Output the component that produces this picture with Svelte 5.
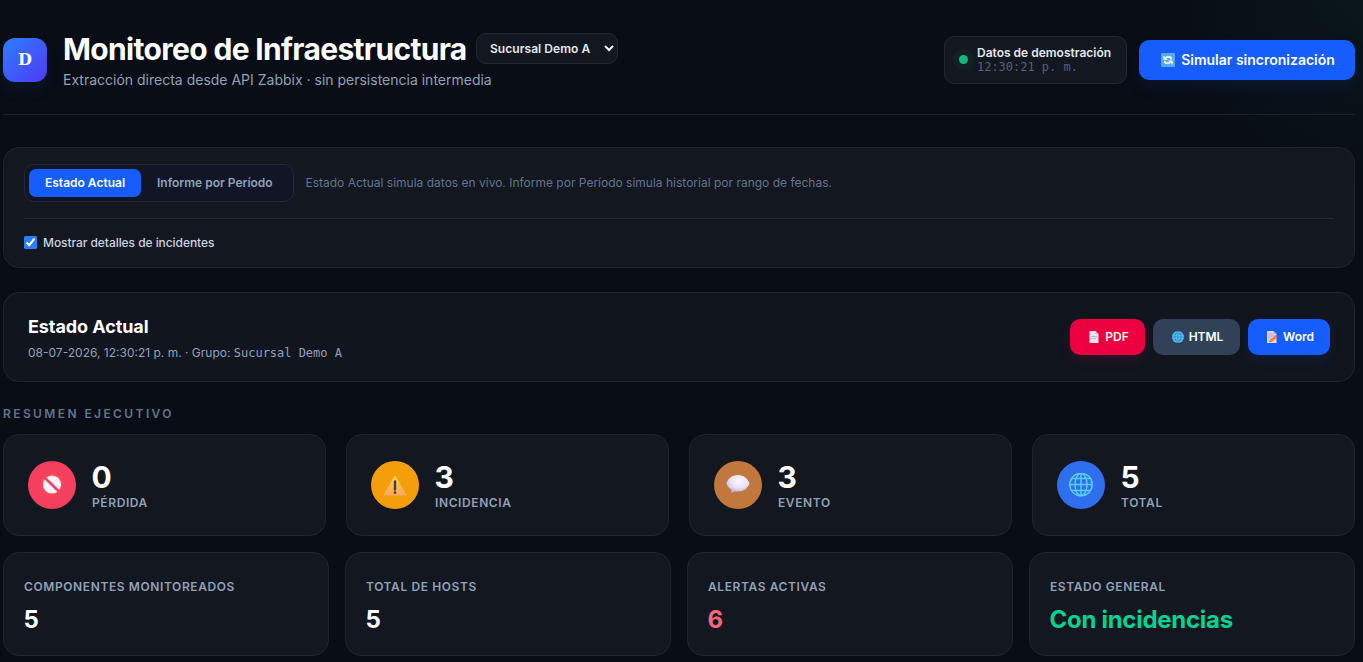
<script>
  let group = 'Sucursal Demo A'
  let tab = 'actual'
  let showDetails = true

  const time = '12:30:21 p. m.'
  const date = '08-07-2026'

  const summary = [
    { icon: 'blocked', value: 0, label: 'Pérdida' },
    { icon: 'warning', value: 3, label: 'Incidencia' },
    { icon: 'bubble', value: 3, label: 'Evento' },
    { icon: 'globe', value: 5, label: 'Total' }
  ]

  const totals = [
    { label: 'Componentes monitoreados', value: '5' },
    { label: 'Total de hosts', value: '5' },
    { label: 'Alertas activas', value: '6', tone: 'danger' },
    { label: 'Estado general', value: 'Con incidencias', tone: 'ok' }
  ]
</script>

<div class="page">
  <header>
    <div class="logo">D</div>
    <div class="heading">
      <div class="title-row">
        <h1>Monitoreo de Infraestructura</h1>
        <div class="select">
          <select bind:value={group}>
            <option>Sucursal Demo A</option>
            <option>Sucursal Demo B</option>
          </select>
          <svg width="10" height="7" viewBox="0 0 10 7"><path d="M1 1l4 4 4-4" fill="none" stroke="#f1f5f9" stroke-width="2" /></svg>
        </div>
      </div>
      <p>Extracción directa desde API Zabbix · sin persistencia intermedia</p>
    </div>
    <div class="status">
      <span class="dot"></span>
      <div>
        <strong>Datos de demostración</strong>
        <span class="mono">{time}</span>
      </div>
    </div>
    <button class="sync">
      <svg width="14" height="14" viewBox="0 0 14 14">
        <rect width="14" height="14" rx="1" fill="#5aa9f8" />
        <path d="M5 4.200h3.500q1.800 0 1.800 2.300M9 10H5.500q-1.800 0-1.800-2.300" fill="none" stroke="#fff" stroke-width="1.700" />
        <path d="M2.500 2.500v4.300h4.300zM11.500 11.700V7.400H7.200z" fill="#fff" />
      </svg>
      <span>Simular sincronización</span>
    </button>
  </header>

  <section class="card filters">
    <div class="mode">
      <div class="tabs">
        <button class:active={tab === 'actual'} on:click={() => tab = 'actual'}>Estado Actual</button>
        <button class:active={tab === 'periodo'} on:click={() => tab = 'periodo'}>Informe por Período</button>
      </div>
      <span class="hint">Estado Actual simula datos en vivo. Informe por Período simula historial por rango de fechas.</span>
    </div>
    <label>
      <input type="checkbox" bind:checked={showDetails} />
      <span>Mostrar detalles de incidentes</span>
    </label>
  </section>

  <section class="card report">
    <div>
      <h2>Estado Actual</h2>
      <p>{date}, {time} · Grupo: <span class="mono">{group}</span></p>
    </div>
    <div class="exports">
      <button class="pdf">
        <svg width="12" height="12" viewBox="0 0 12 12">
          <path d="M1.500 0h6l3 3v9h-9z" fill="#eee4f2" />
          <path d="M7.500 0v3h3z" fill="#bdb0c9" />
          <path d="M3 5.500h6M3 7.500h5" stroke="#b3a8c0" stroke-width=".8" />
        </svg>
        <span>PDF</span>
      </button>
      <button class="html">
        <svg width="12" height="12" viewBox="0 0 24 24">
          <circle cx="12" cy="12" r="12" fill="#52c3f8" />
          <path d="M12 0v24M0 12h24M2 6h20M2 18h20M12 0c-8 6-8 18 0 24M12 0c8 6 8 18 0 24" fill="none" stroke="#2a7fbd" stroke-width="1.200" />
        </svg>
        <span>HTML</span>
      </button>
      <button class="word">
        <svg width="12" height="12" viewBox="0 0 12 12">
          <path d="M1 0h6.500l3 3v9H1z" fill="#e0d6e6" />
          <path d="M7.500 0v3h3z" fill="#b8abc4" />
          <path d="M2.500 3h4M2.500 5h6M2.500 7h3" stroke="#aaa0b6" stroke-width=".8" />
          <path d="M3 11.300l.6-2.200L9 4.800l1.900 2-5.200 4z" fill="#fb7a42" />
          <path d="M9 4.800l1-.8 1.900 1.900-1 .9z" fill="#e5484d" />
        </svg>
        <span>Word</span>
      </button>
    </div>
  </section>

  <h3>Resumen ejecutivo</h3>

  <div class="summary">
    {#each summary as item}
      <div class="card stat">
        <div class="badge {item.icon}">
          {#if item.icon === 'blocked'}
            <svg width="24" height="24" viewBox="0 0 24 24">
              <circle cx="12" cy="11.500" r="10.300" fill="#f9f1ff" stroke="#ff4653" stroke-width="2.500" />
              <path d="M4.500 4.500l15 14.500" stroke="#f8405a" stroke-width="2.500" />
            </svg>
          {:else if item.icon === 'warning'}
            <svg width="24" height="24" viewBox="0 0 24 24">
              <defs>
                <linearGradient id="warn" x1="0" y1="0" x2="0" y2="1">
                  <stop offset="0" stop-color="#ffd24a" />
                  <stop offset="1" stop-color="#ffa75c" />
                </linearGradient>
              </defs>
              <path d="M12 3l11 19H1z" fill="url(#warn)" stroke="url(#warn)" stroke-linejoin="round" />
              <path d="M12 8.500v8" stroke="#483d4e" stroke-width="2.400" stroke-linecap="round" />
              <circle cx="12" cy="19.600" r="1.300" fill="#483d4e" />
            </svg>
          {:else if item.icon === 'bubble'}
            <svg width="24" height="24" viewBox="0 0 24 24">
              <defs>
                <radialGradient id="bubble" cx=".55" cy=".35" r=".65">
                  <stop offset="0" stop-color="#fbf8fd" />
                  <stop offset=".6" stop-color="#eae1f2" />
                  <stop offset="1" stop-color="#bba9d3" />
                </radialGradient>
              </defs>
              <path d="M12 2C6 2 2 5.500.3 10.500c1.200 2.800 2.900 4.900 4.900 6.100.3 1.200.2 2.300-.3 3.200 1.900-.2 3.300-.8 4.100-1.500 1 .2 2 .2 3 .2 5.500 0 9.700-3 11.700-8C21.700 5.500 18 2 12 2z" fill="url(#bubble)" />
            </svg>
          {:else}
            <svg width="24" height="24" viewBox="0 0 24 24">
              <g fill="none" stroke="#5acbff" stroke-width="1.500">
                <circle cx="12" cy="11.500" r="11.200" />
                <ellipse cx="12" cy="11.500" rx="6" ry="11.200" />
                <path d="M12 .3v22.400M.8 11.500h22.400M3 5.500h18M3 17.500h18" />
              </g>
            </svg>
          {/if}
        </div>
        <div>
          <div class="number">{item.value}</div>
          <div class="caption">{item.label}</div>
        </div>
      </div>
    {/each}
  </div>

  <div class="totals">
    {#each totals as item}
      <div class="card total">
        <div class="caption">{item.label}</div>
        <div class="value {item.tone || ''}">{item.value}</div>
      </div>
    {/each}
  </div>
</div>

<style>
:global(body) {
  background: #090d15;
  overflow: hidden;
}

.page {
  box-sizing: border-box;
  width: 1363px;
  height: 662px;
  padding: 0 8px 0 3px;
  overflow: hidden;
  font-family: Inter, 'Liberation Sans', sans-serif;
  color: #e2e8f0;
  background: radial-gradient(circle at 100% 0, #0a151c 0, transparent 220px), #090d15;
}

h1, h2, h3, p {
  margin: 0;
}

button {
  border: 0;
  padding: 0;
  font-family: inherit;
  color: #fff;
}

.mono {
  font-family: 'DejaVu Sans Mono', monospace;
  font-size: 12px;
  letter-spacing: -.02px;
}

.card {
  box-sizing: border-box;
  background: #13171f;
  border: 1px solid #20242d;
  border-radius: 16px;
}

header {
  display: flex;
  align-items: center;
  box-sizing: border-box;
  height: 115px;
  padding-top: 6px;
  border-bottom: 1px solid #1b1f27;
}

.logo {
  width: 44px;
  height: 44px;
  margin-right: 16px;
  border-radius: 12px;
  text-align: center;
  font: bold 16px/44px 'DejaVu Serif', serif;
  color: #fff;
  background: linear-gradient(135deg, #2b7fff, #4f39f6);
  box-shadow: 0 8px 16px rgba(43, 90, 255, .09);
}

.heading {
  flex: 1;
}

.title-row {
  display: flex;
  align-items: center;
  gap: 10px;
  height: 36px;
}

h1 {
  width: 403px;
  font-size: 30px;
  line-height: 36px;
  font-weight: 700;
  letter-spacing: -.67px;
  white-space: nowrap;
  color: #fff;
}

.select {
  position: relative;
}

.select svg {
  position: absolute;
  right: 4px;
  top: 12px;
}

select {
  display: block;
  appearance: none;
  box-sizing: border-box;
  width: 142px;
  height: 31px;
  padding: 0 0 0 13px;
  border: 1px solid #242831;
  border-radius: 10px;
  background: #13171f;
  color: #e2e8f0;
  font: 600 12px Inter, sans-serif;
  letter-spacing: .05px;
}

.heading p {
  margin-top: 3px;
  font-size: 14px;
  line-height: 20px;
  color: #90a1b9;
}

.status {
  box-sizing: border-box;
  display: flex;
  align-items: center;
  width: 183px;
  height: 48px;
  margin-right: 12px;
  padding-left: 14px;
  gap: 9px;
  border: 1px solid #23272f;
  border-radius: 10px;
  background: #13171f;
}

.status strong, .status .mono {
  display: block;
  font-size: 12px;
  line-height: 14px;
}

.status strong {
  font-weight: 600;
}

.status .mono {
  color: #52617a;
}

.dot {
  width: 9px;
  height: 9px;
  margin-bottom: 1px;
  border-radius: 50%;
  background: #10b981;
  box-shadow: 0 0 0 6px #132023;
}

.sync {
  display: flex;
  align-items: center;
  justify-content: center;
  gap: 6px;
  width: 216px;
  height: 40px;
  padding: 0 0 1px 2px;
  border-radius: 10px;
  background: #155dfc;
  font-size: 14px;
  font-weight: 600;
  box-shadow: 0 8px 16px rgba(21, 93, 252, .09);
}

.filters {
  height: 121px;
  margin-top: 32px;
  padding: 16px 20px;
}

.mode {
  display: flex;
  align-items: center;
  height: 55px;
  padding-bottom: 16px;
  box-sizing: border-box;
  border-bottom: 1px solid #23272f;
  margin-bottom: 15px;
}

.tabs {
  box-sizing: border-box;
  display: flex;
  width: 270px;
  height: 38px;
  padding: 4px;
  border: 1px solid #242935;
  border-radius: 10px;
  background: #101626;
}

.tabs button {
  height: 28px;
  padding: 0 16px 1px;
  border-radius: 7px;
  background: none;
  font-size: 12px;
  font-weight: 600;
  color: #90a1b9;
}

.tabs .active {
  background: #155dfc;
  color: #fff;
}

.hint {
  margin: 0 0 2px 11.500px;
  font-size: 12px;
  color: #62748e;
}

label {
  display: flex;
  align-items: center;
  gap: 6px;
  height: 16px;
  font-size: 12px;
  font-weight: 500;
  letter-spacing: -.06px;
  color: #cad5e2;
}

input {
  width: 13px;
  height: 13px;
  margin: 0;
  accent-color: #2b7fff;
}

.report {
  display: flex;
  align-items: center;
  justify-content: space-between;
  height: 90px;
  margin-top: 24px;
  padding: 0 24px;
  background: #11151e;
}

h2 {
  padding-top: 2px;
  font-size: 18px;
  line-height: 28px;
  font-weight: 700;
  letter-spacing: -.08px;
  color: #fff;
}

.report p {
  margin-top: 2px;
  font-size: 12px;
  line-height: 20px;
  color: #90a1b9;
}

.exports {
  display: flex;
  gap: 8px;
}

.exports button {
  display: flex;
  align-items: center;
  justify-content: center;
  gap: 5px;
  height: 36px;
  padding: 0 0 1px 2px;
  border-radius: 10px;
  font-size: 12px;
  font-weight: 600;
}

.exports .pdf {
  width: 75px;
  background: #ec003f;
  box-shadow: 0 6px 12px rgba(236, 0, 63, .11);
}

.exports .html {
  width: 87px;
  background: #314158;
}

.exports .word {
  width: 82px;
  background: #155dfc;
  box-shadow: 0 6px 12px rgba(21, 93, 252, .09);
}

h3 {
  height: 16px;
  margin: 24px 0 12px;
  font-size: 12px;
  line-height: 16px;
  font-weight: 600;
  letter-spacing: 2.400px;
  text-transform: uppercase;
  color: #62748e;
}

.summary, .totals {
  display: grid;
  grid-template-columns: repeat(4, 1fr);
}

.summary {
  gap: 20px;
}

.totals {
  gap: 16px;
  margin-top: 16px;
}

.stat {
  display: flex;
  align-items: center;
  gap: 16px;
  height: 102px;
  padding: 0 24px;
}

.badge {
  display: flex;
  align-items: center;
  justify-content: center;
  width: 48px;
  height: 48px;
  border-radius: 50%;
}

.blocked {
  background: #f43f5e;
}

.warning {
  background: #f59e0b;
}

.bubble {
  background: #c2783c;
}

.globe {
  background: #2f6fed;
}

.number {
  padding-top: 2px;
  font-size: 30px;
  line-height: 32px;
  font-weight: 700;
  text-indent: -.5px;
  color: #fff;
}

.caption {
  font-size: 12px;
  line-height: 16px;
  font-weight: 600;
  letter-spacing: .6px;
  text-transform: uppercase;
  color: #90a1b9;
}

.stat .caption {
  margin-top: 2px;
}

.total {
  height: 104px;
  padding: 26px 20px;
}

.value {
  margin-top: 9px;
  font-size: 24px;
  line-height: 32px;
  font-weight: 700;
  letter-spacing: -.28px;
  text-indent: -.5px;
  color: #fff;
}

.danger {
  color: #ff637e;
}

.ok {
  color: #00d492;
}
</style>
